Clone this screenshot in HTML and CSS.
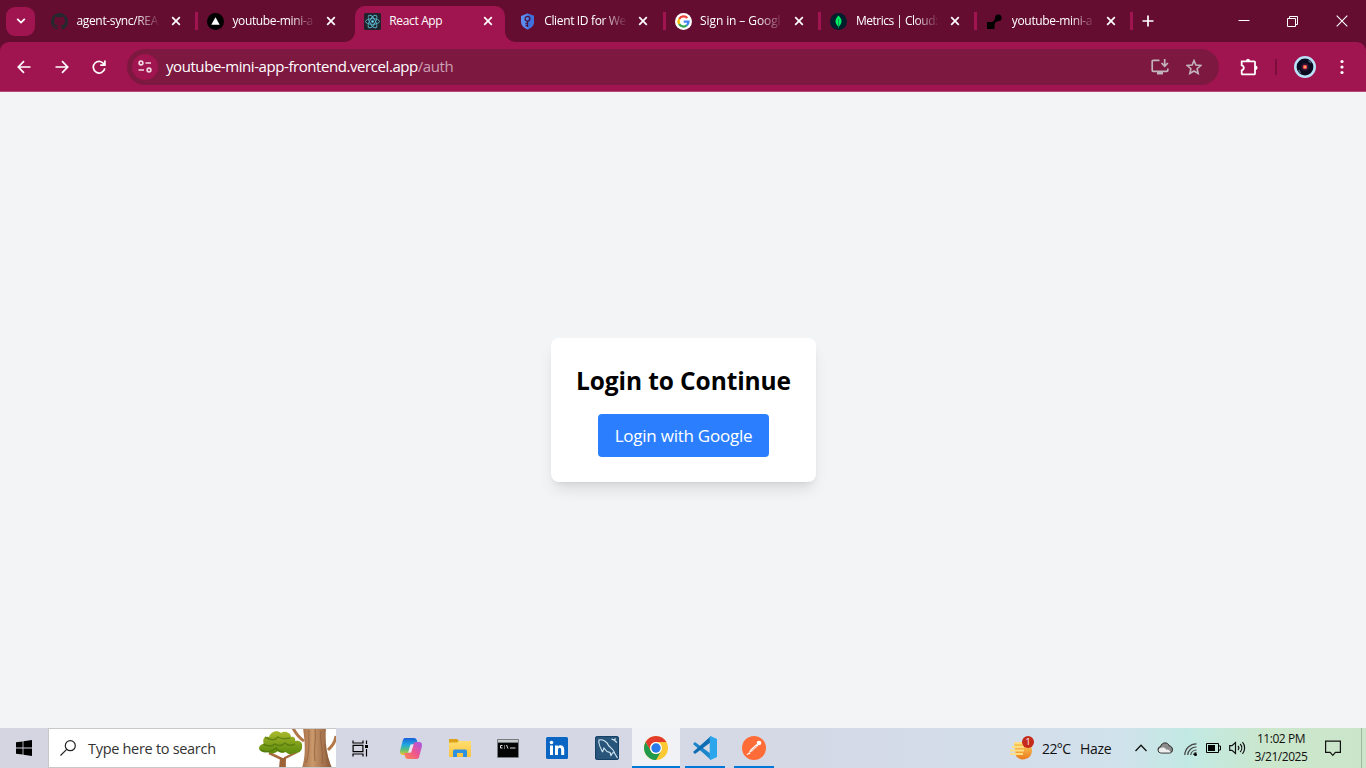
FILE: index.html
```html
<!DOCTYPE html>
<html lang="en">
<head>
<meta charset="utf-8">
<title>React App</title>
<link rel="stylesheet" href="styles.css">
</head>
<body>
<svg width="0" height="0" class="defs">
  <defs>
    <symbol id="close" viewBox="0 0 10 10"><path d="M1.2 1.2l7.6 7.6M8.8 1.2L1.2 8.800" stroke="#fff" stroke-width="1.7" fill="none"/></symbol>
    <linearGradient id="cop1" x1="0" y1="0" x2="0" y2="1"><stop offset="0" stop-color="#1a5fd8"/><stop offset=".4" stop-color="#1fa8e0"/><stop offset=".7" stop-color="#5cc07a"/><stop offset="1" stop-color="#f2c32e"/></linearGradient>
    <linearGradient id="cop2" x1="1" y1="0" x2="0" y2="1"><stop offset="0" stop-color="#a456ea"/><stop offset=".5" stop-color="#ee5590"/><stop offset="1" stop-color="#fb8a4a"/></linearGradient>
    <linearGradient id="leaf" x1="0" y1="0" x2="0" y2="1"><stop offset="0" stop-color="#a9b92c"/><stop offset="1" stop-color="#5c8a0c"/></linearGradient>
    <linearGradient id="trunk"><stop offset="0" stop-color="#a87048"/><stop offset=".35" stop-color="#c9986b"/><stop offset="1" stop-color="#8a5736"/></linearGradient>
    <linearGradient id="folder" x1="0" y1="0" x2="0" y2="1"><stop offset="0" stop-color="#ffdf70"/><stop offset="1" stop-color="#fcc13c"/></linearGradient>
    <linearGradient id="sun" x1="0" y1="0" x2="0" y2="1"><stop offset="0" stop-color="#f8cf5c"/><stop offset="1" stop-color="#ee7a1c"/></linearGradient>
  </defs>
</svg>
<div class="screen">
  <header class="tabstrip">
    <div class="tab-search"><svg width="10" height="8" viewBox="0 0 10 8"><path d="M1.200 1.800L5 5.600 8.800 1.800" stroke="#fff" stroke-width="1.800" fill="none"/></svg></div>
    <div class="tabs">
      <div class="tab">
        <svg class="fav" viewBox="0 0 16 16"><path fill="#24292f" d="M8 0C3.580 0 0 3.580 0 8c0 3.540 2.290 6.530 5.470 7.590.4.070.55-.17.55-.38v-1.490c-2.010.37-2.530-.49-2.690-.94-.09-.23-.48-.94-.82-1.130-.28-.15-.68-.52-.01-.53.63-.01 1.080.58 1.230.82.72 1.210 1.870.87 2.330.66.07-.52.28-.87.51-1.070-1.780-.2-3.640-.89-3.640-3.950 0-.87.31-1.590.82-2.150-.08-.2-.36-1.020.08-2.120 0 0 .67-.21 2.200.82a7.600 7.600 0 0 1 4 0c1.530-1.040 2.200-.82 2.200-.82.44 1.100.16 1.920.08 2.120.51.56.82 1.270.82 2.150 0 3.070-1.870 3.750-3.650 3.950.29.25.54.73.54 1.480v2.200c0 .21.15.46.55.38A8 8 0 0 0 16 8c0-4.420-3.580-8-8-8z"/></svg>
        <span class="tab-title fade">agent-sync/REA</span><svg class="x"><use href="#close"/></svg>
      </div>
      <div class="tab nosep">
        <svg class="fav" viewBox="0 0 17 17"><circle cx="8.500" cy="8.500" r="8.500"/><path d="M8.500 4.200l4.200 7.600H4.300z" fill="#fff"/></svg>
        <span class="tab-title fade">youtube-mini-a</span><svg class="x"><use href="#close"/></svg>
      </div>
      <div class="tab active nosep">
        <svg class="fav" viewBox="0 0 17 17"><rect width="17" height="17" rx="1.500" fill="#20232a"/><g fill="none" stroke="#58b8d0" stroke-width=".9"><ellipse cx="8.500" cy="8.500" rx="7" ry="2.800"/><ellipse cx="8.500" cy="8.500" rx="7" ry="2.800" transform="rotate(60 8.500 8.500)"/><ellipse cx="8.500" cy="8.500" rx="7" ry="2.800" transform="rotate(120 8.500 8.500)"/></g><circle cx="8.500" cy="8.500" r="1.300" fill="#61dafb"/></svg>
        <span class="tab-title react">React App</span><svg class="x"><use href="#close"/></svg>
      </div>
      <div class="tab">
        <svg class="fav" viewBox="0 0 17 17"><path d="M8.500.5L15 3v5.500c0 3.600-2.600 6.300-6.500 8-3.900-1.700-6.500-4.400-6.500-8V3z" fill="#5b8cf0"/><path d="M8.500.5L15 3v5.500c0 3.600-2.600 6.300-6.500 8z" fill="#3f70dc"/><circle cx="8.500" cy="5.700" r="2.400" fill="none" stroke="#4a1445" stroke-width="1.300"/><path d="M8.500 8v6M8.500 10.500h-2M8.500 12.700h-2" stroke="#4a1445" stroke-width="1.300"/></svg>
        <span class="tab-title fade">Client ID for We</span><svg class="x"><use href="#close"/></svg>
      </div>
      <div class="tab">
        <svg class="fav" viewBox="0 0 17 17"><circle cx="8.500" cy="8.500" r="8.500" fill="#fff"/><g fill="none" stroke-width="2.300"><path d="M12.300 5A5 5 0 0 0 4.200 6" stroke="#ea4335"/><path d="M4.200 6a5 5 0 0 0 0 5" stroke="#fbbc05"/><path d="M4.200 11a5 5 0 0 0 7.500 1.400" stroke="#34a853"/><path d="M8.700 8.700h4.800a5 5 0 0 1-1.800 3.700" stroke="#4285f4"/></g></svg>
        <span class="tab-title fade wide">Sign in – Googl</span><svg class="x"><use href="#close"/></svg>
      </div>
      <div class="tab">
        <svg class="fav" viewBox="0 0 17 17"><circle cx="8.500" cy="8.500" r="8.500" fill="#001e2b"/><path d="M8.500 2.500c4 4 4 7.500 0 11.500-4-4-4-7.500 0-11.500z" fill="#00ed64"/><path d="M8.500 6v9" stroke="#0a8c4b" stroke-width=".8"/></svg>
        <span class="tab-title fade tight">Metrics | Cloud:</span><svg class="x"><use href="#close"/></svg>
      </div>
      <div class="tab">
        <svg class="fav" viewBox="0 0 17 17"><path d="M1 9h4.500C8 8.500 9 7 9 4.500A3.300 3.300 0 1 1 13 8c-3 .300-4.500 1.500-4.500 4.500V16H1z"/></svg>
        <span class="tab-title fade">youtube-mini-a</span><svg class="x"><use href="#close"/></svg>
      </div>
    </div>
    <svg class="newtab" width="12" height="12" viewBox="0 0 12 12"><path d="M6 .5v11M.5 6h11" stroke="#fff" stroke-width="1.700"/></svg>
    <div class="winctl">
      <svg width="12" height="12" viewBox="0 0 12 12"><path d="M.5 5.500h11" stroke="#fff"/></svg>
      <svg width="12" height="12" viewBox="0 0 12 12"><path d="M.5 3.500h8v8h-8zM2.500 3.500v-2h8v8h-2" stroke="#fff" fill="none"/></svg>
      <svg width="12" height="12" viewBox="0 0 12 12"><path d="M.7.700l10.600 10.600M11.300.7L.7 11.300" stroke="#fff" stroke-width="1.100"/></svg>
    </div>
  </header>
  <div class="toolbar-wrap">
  <nav class="toolbar">
    <div class="navbtns">
      <svg width="14" height="14" viewBox="0 0 14 14"><path d="M13.500 7H1.500M7 1.200L1.300 7 7 12.800" stroke="#fff" stroke-width="1.700" fill="none"/></svg>
      <svg width="14" height="14" viewBox="0 0 14 14"><path d="M.5 7h12M7 1.200L12.700 7 7 12.800" stroke="#fff" stroke-width="1.700" fill="none"/></svg>
      <svg width="14" height="14" viewBox="0 0 14 14"><path d="M12.300 4.600A5.800 5.800 0 1 0 12.800 8.300M12.900.5v4.700H8.200" stroke="#fff" stroke-width="1.700" fill="none"/></svg>
    </div>
    <div class="omnibox">
      <div class="siteinfo"><svg width="14" height="13" viewBox="0 0 14 13" fill="none" stroke="#f0d8e2" stroke-width="1.600"><circle cx="3" cy="3" r="1.900"/><path d="M7.500 3H13M.5 10H6"/><circle cx="11" cy="10" r="1.900"/></svg></div>
      <div class="url">youtube-mini-app-frontend.vercel.app<span>/auth</span></div>
      <svg class="install" width="18" height="16" viewBox="0 0 18 16" fill="none" stroke="#c3b3bb" stroke-width="1.700"><path d="M8.500 1.300H2.200a1 1 0 0 0-1 1v9a1 1 0 0 0 1 1h13.600a1 1 0 0 0 1-1V9.500M13.700 0v6.800M10.500 4l3.200 3.200L16.900 4"/><path d="M6 14h6" stroke-width="3"/></svg>
      <svg class="star" width="16" height="16" viewBox="0 0 16 16"><path d="M8 1.600l1.900 4.500 4.900.4-3.700 3.200 1.100 4.800L8 12l-4.200 2.500 1.100-4.800L1.200 6.500l4.900-.4z" stroke="#c3b3bb" stroke-width="1.600" fill="none"/></svg>
    </div>
    <svg class="puzzle" width="18" height="18" viewBox="0 0 18 18"><path d="M1.700 3.400H14.200a.8.8 0 0 1 .8.800v11.300a.8.8 0 0 1-.8.800H2.500a.8.8 0 0 1-.8-.8V12.400a2.600 2.600 0 0 0 0-5.100z" fill="none" stroke="#fff" stroke-width="1.800"/><path d="M5.800 3.400a2.200 2.600 0 0 1 4.400 0zM15 7.600a2.600 2.200 0 0 1 0 4.400z" fill="#fff"/></svg>
    <i class="divider"></i>
    <svg class="avatar" width="22" height="22" viewBox="0 0 22 22"><circle cx="11" cy="11" r="9.700" fill="#090c20" stroke="#b9e1f8" stroke-width="2.600"/><path d="M14.500 4.500l2.500 2.500M4.500 14l2 3" stroke="#4c566e" stroke-width="1.600"/><circle cx="11" cy="11" r="4" fill="#2a1430"/><circle cx="11" cy="11" r="2.300" fill="#ef4650"/><circle cx="11" cy="11" r="1" fill="#ffc65a"/></svg>
    <svg class="dots" width="4" height="16" viewBox="0 0 4 16" fill="#fff"><circle cx="2" cy="2.500" r="1.600"/><circle cx="2" cy="8" r="1.600"/><circle cx="2" cy="13.500" r="1.600"/></svg>
  </nav>
  </div>
  <main class="page">
    <section class="card">
      <h2>Login to Continue</h2>
      <button class="login">Login with Google</button>
    </section>
  </main>
  <footer class="taskbar">
    <div class="start"><svg width="16" height="16" viewBox="0 0 16 16"><path d="M0 2.300l6.600-.9v6.200H0zM7.400 1.300L16 0v7.600H7.400zM0 8.400h6.600v6.200L0 13.700zM7.400 8.400H16V16l-8.600-1.200z"/></svg></div>
    <div class="search">
      <svg class="mag" width="16" height="16" viewBox="0 0 16 16" fill="none" stroke="#222" stroke-width="1.200"><circle cx="10.300" cy="5.700" r="5"/><path d="M6.700 9.300L.5 15.500"/></svg>
      <span>Type here to search</span>
      <svg class="tree" width="77" height="40" viewBox="0 0 77 40">
        <path d="M22 40l1-9-13-6M25 40l1-10 12-6" stroke="#a56b3e" stroke-width="2.500" fill="none"/><path d="M20 40l1-10h5l1 10z" fill="#9c6339"/>
        <path d="M0 21c0-4 3-5 5-5-2-4 0-8 5-7C12 3 19 2 22 5c4-3 10 0 10 4 3-1 5 2 4 4 5-1 8 2 7 6 0 5-4 6-7 6-4 2-8 1-9-1-3 1-7 1-8-1-3 3-8 3-10 1-5 1-9-1-9-4z" fill="url(#leaf)"/>
        <path d="M4 16c4 2 9 3 12 0 3 2 7 2 10-1 2 2 6 3 10 1M6 9c5 3 10 4 13 0 3 2 8 2 12 1M2 22c5 3 11 2 15-2 2 3 4 4 8 4" stroke="#4c7009" stroke-width="1.500" fill="none" opacity=".65"/>
        <path d="M34 0c3 6 5 9 11 13M77 8c-1 7-4 10-8 14" stroke="#b3784a" stroke-width="3" fill="none"/>
        <path d="M44 0h23c-1 13 0 26 6 40H43c4-13 3-26 1-40z" fill="url(#trunk)"/>
        <path d="M50 2c-1 11 2 19-3 33M56 0c2 12-2 18 0 33M62 3c-2 9 3 18 1 33M66 16c0 6 2 12 3 18" stroke="#8c5a38" stroke-width="1.200" fill="none" opacity=".6"/>
      </svg>
    </div>
    <div class="app"><svg width="17" height="17" viewBox="0 0 17 17" fill="none" stroke="#000" stroke-width="1.200"><path d="M1 .5V3h10V.5M1 16.500V14h10v2.500M1.100 5.300h9.800v6.400H1.100zM14.500.5V4M14.500 9v7.500"/><path d="M13 5h3v3h-3z" fill="#000" stroke="none"/></svg></div>
    <div class="app a2"><svg width="22" height="21" viewBox="0 0 22 21"><path d="M5 0h9c2 0 2.700 1.500 3.200 3.500L18 6h-4c-2 0-3 1-3.600 3L8.500 15.300C8 17 7 17 5 17H3c-3 0-3.500-2.500-2.500-6l2-7.500C3 1.300 3.500 0 5 0z" fill="url(#cop1)"/><path d="M17 21H8c-2 0-2.700-1.500-3.200-3.500L4 15h4c2 0 3-1 3.600-3l1.900-6.300C14 4 15 4 17 4h2c3 0 3.500 2.500 2.500 6l-2 7.500C19 19.700 18.500 21 17 21z" fill="url(#cop2)"/><path d="M10.500 6.500h3l-2.400 8h-3z" fill="#e8e4f2"/></svg></div>
    <div class="app a3"><svg width="22" height="18" viewBox="0 0 22 18"><path d="M0 1a1 1 0 0 1 1-1h7l2 2-2 2H0z" fill="#dba117"/><path d="M0 3.500h8l2-1.500h11a1 1 0 0 1 1 1v14a1 1 0 0 1-1 1H1a1 1 0 0 1-1-1z" fill="url(#folder)"/><path d="M4 18v-6a1.500 1.500 0 0 1 1.500-1.500h11A1.500 1.500 0 0 1 18 12v6h-4v-4H8v4z" fill="#3092df"/></svg></div>
    <div class="app"><svg width="22" height="19" viewBox="0 0 22 19"><rect width="22" height="19" rx="1" fill="#777c80"/><path d="M1 1h20v2H1z" fill="#c8cbcc"/><path d="M1 4h20v14H1z" fill="#050505"/><path d="M5.500 6.500h-2V9h2M7.500 6.500v1M7.500 8.500v1M9.500 6l1.500 3.500M13 9h5.500" stroke="#ddd" fill="none"/></svg></div>
    <div class="app a5"><svg width="22" height="22" viewBox="0 0 22 22"><rect width="22" height="22" rx="1.500" fill="#0a66c2"/><path d="M4 8.500h3V18H4zM9 8.500h2.900v1.300c1.500-2.400 6.300-2 6.300 2.700V18h-3v-5c0-3-3.200-2.800-3.200 0v5H9z" fill="#fff"/><circle cx="5.500" cy="5.500" r="1.800" fill="#fff"/></svg></div>
    <div class="app"><svg width="24" height="24" viewBox="0 0 24 24"><rect width="24" height="24" rx="2.500" fill="#28567b"/><rect x=".5" y=".5" width="23" height="23" rx="2" fill="none" stroke="#174164"/><path d="M7.500 16C6 13 3 8 4 4c4-1 8 2 9.500 5.500C16 12 19 14 19.500 17l3 5M7.500 16l1.500-4 3 3.500 3 1 1 3 1.500-2.500 2-.5M16.500 3l2.500 1 1-1v2l2 1.500" fill="none" stroke="#d5e7f3" stroke-width="1.100"/></svg></div>
    <div class="app chrome"><svg width="24" height="24" viewBox="0 0 24 24"><circle cx="12" cy="12" r="12" fill="#fcc934"/><path d="M1.610 6A12 12 0 0 1 22.390 6H12a6 6 0 0 0-5.200 9z" fill="#e33b2e"/><path d="M1.610 6A12 12 0 0 0 12 24l5.200-9A6 6 0 0 1 6.800 15z" fill="#229a4d"/><circle cx="12" cy="12" r="6" fill="#fff"/><circle cx="12" cy="12" r="4.700" fill="#287be8"/></svg></div>
    <div class="app vs"><svg width="24" height="24" viewBox="0 0 24 24"><path d="M0 8l2-2 16 12v6z" fill="#1c86cc"/><path d="M0 16l2 2L18 6V0z" fill="#0f6db3"/><path d="M17.500 0L24 3v18l-6.500 3c-.8-.5-.8-1-.8-2V2c0-1 0-1.500.8-2z" fill="#2ba5ec"/></svg></div>
    <div class="app pm"><svg width="24" height="24" viewBox="0 0 24 24"><circle cx="12" cy="12" r="12" fill="#ff6c37"/><path d="M6.500 17l2-3.500 6-5.500 2 1.500-6.500 6z" fill="#fff"/><circle cx="17" cy="7" r="2.300" fill="#fff"/><path d="M9 15.500l5.500-5.500" stroke="#e2825e" stroke-width=".8"/><path d="M4.800 18.500l3.500-1.500" stroke="#fff" stroke-width="1.200"/></svg></div>
    <div class="tray">
      <svg class="weather" width="24" height="24" viewBox="0 0 24 24"><path d="M4 7h13a8 8 0 0 1 5 7 9 9 0 0 1-16 6z" fill="url(#sun)"/><path d="M4 7h9M2 11h12M0 14.500h14M0 18h13" stroke="#ffdd83" stroke-width="1.900"/><circle cx="18" cy="6" r="6" fill="#c42b1c"/><text x="18" y="9.300" text-anchor="middle" class="badge">1</text></svg>
      <span class="temp">22°C</span><span class="haze">Haze</span>
      <svg class="chev" width="12" height="8" viewBox="0 0 12 8"><path d="M.5 7L6 1.300 11.500 7" fill="none" stroke="#111" stroke-width="1.300"/></svg>
      <svg class="cloud" width="16" height="12" viewBox="0 0 16 12"><path d="M4 11a3.300 3.300 0 0 1-.5-6.500C5-.2 11-.2 12.300 4 16.500 4.200 16.500 11 12.500 11z" fill="#8c8c8c" stroke="#222"/><path d="M3.800 10.500C1 10 1 6.500 4 6c2-1 4-.5 5 1.500 2-.5 4 .5 4.500 3z" fill="#eee"/></svg>
      <svg class="wifi" width="13" height="13" viewBox="0 0 13 13" fill="none" stroke="#444" stroke-width="1.200"><path d="M.8 12A11.500 11.500 0 0 1 12.500.8M3.700 12A8.500 8.500 0 0 1 12.500 4M6.700 12a5.800 5.800 0 0 1 5.800-5M9.500 12a3 3 0 0 1 3-2.500"/><circle cx="11.500" cy="11.500" r="1.500" fill="#000" stroke="none"/></svg>
      <svg class="bat" width="15" height="10" viewBox="0 0 15 10"><path d="M.5.500h12v9H.5zM12.500 3h2v4h-2" fill="none" stroke="#000"/><path d="M2 2h7v6H2z"/></svg>
      <svg class="spk" width="17" height="14" viewBox="0 0 17 14" fill="none" stroke="#111" stroke-width="1.200"><path d="M.7 4.700h2.300l3.500-3.200v11L3 9.300H.7zM9 5a3 3 0 0 1 0 4M11.200 3a6 6 0 0 1 0 8M13.500 1.200a9 9 0 0 1 0 11.600"/></svg>
      <div class="clock"><div class="time">11:02 PM</div><div class="date">3/21/2025</div></div>
      <svg class="notif" width="16" height="17" viewBox="0 0 16 17"><path d="M.6 1.100h14.800v11.300h-5L7.800 15.300l-2.600-2.900H.6z" fill="none" stroke="#111" stroke-width="1.200"/></svg>
      <i class="peek"></i>
    </div>
  </footer>
</div>
</body>
</html>
```
FILE: styles.css
```css
* { box-sizing: border-box; }
body { margin: 0; font-family: "Open Sans", "Noto Sans", sans-serif; }
svg { display: block; flex: none; }
.defs { position: absolute; }
.screen { width: 1366px; height: 768px; display: flex; flex-direction: column; overflow: hidden; background: #650d31; }

.tabstrip { height: 42px; flex: none; display: flex; align-items: center; padding-left: 6px; }
.tab-search { width: 29px; height: 29px; border-radius: 9px; background: #a0154f; display: flex; align-items: center; justify-content: center; margin-right: 7px; }
.tabs { display: flex; height: 42px; }
.tab { width: 155.900px; height: 42px; display: flex; align-items: center; padding-left: 9px; background: linear-gradient(#a0154f, #a0154f) 100% 12px / 3px 18px no-repeat; }
.tab.nosep { background: none; }
.fav { width: 17px; height: 17px; }
.tab-title { width: 86px; margin-left: 8.500px; padding-bottom: 0; white-space: nowrap; color: #fff; font-size: 12px; line-height: 18px; letter-spacing: -.35px; }
.tab-title.wide { letter-spacing: -.1px; }
.tab-title.tight { letter-spacing: -.5px; }
.fade { -webkit-mask-image: linear-gradient(90deg, #000 68%, transparent 97%); mask-image: linear-gradient(90deg, #000 68%, transparent 97%); }
.x { width: 10px; height: 10px; margin-left: 8px; }
.tab.active { position: relative; z-index: 0; padding-left: 10px; }
.tab.active::before { content: ""; position: absolute; z-index: -1; left: 1.200px; width: 150px; top: 6px; bottom: 0; background: #a0154f; border-radius: 10px 10px 0 0; }
.tab.active::after { content: ""; position: absolute; z-index: -1; left: -8.800px; width: 170px; bottom: 0; height: 10px; background: radial-gradient(circle at 0 0, transparent 9.500px, #a0154f 10px) 0 0 / 10px 10px no-repeat, radial-gradient(circle at 100% 0, transparent 9.500px, #a0154f 10px) 100% 0 / 10px 10px no-repeat; }
.newtab { margin-left: 9px; }
.winctl { margin-left: auto; display: flex; gap: 37px; padding-right: 18px; }

.toolbar-wrap { flex: none; background: #650d31; }
.toolbar { height: 50px; background: #a0154f; border-bottom: 1px solid #b54b77; border-radius: 9px 9px 0 0; display: flex; align-items: center; padding-left: 17px; }
.navbtns { display: flex; gap: 23.500px; width: 110px; }
.omnibox { width: 1092px; height: 36px; border-radius: 18px; background: #7d1841; display: flex; align-items: center; padding-left: 5px; }
.siteinfo { width: 26px; height: 26px; border-radius: 50%; background: #a0154f; display: flex; align-items: center; justify-content: center; }
.url { margin-left: 8px; width: 985px; padding-bottom: 2px; color: #fff; font-size: 15px; letter-spacing: -.43px; white-space: nowrap; }
.url span { color: #cda0b4; }
.star { margin-left: 17px; }
.puzzle { margin-left: 21px; }
.divider { width: 2px; height: 16px; background: #7d0e3c; margin-left: 17px; }
.avatar { margin-left: 17px; }
.dots { margin-left: 24px; }

.page { flex: 1; background: #f3f4f6; display: flex; align-items: center; justify-content: center; }
.card { width: 265px; height: 144px; background: #fff; border-radius: 8px; padding-top: 26px; display: flex; flex-direction: column; align-items: center; box-shadow: 0 10px 15px -3px rgba(0,0,0,.1), 0 4px 6px -4px rgba(0,0,0,.1); }
.card h2 { margin: 0 0 16px; padding-left: 1px; font-size: 24.500px; line-height: 34px; font-weight: 700; letter-spacing: -.1px; white-space: nowrap; }
.login { width: 171px; height: 43px; border: 0; padding: 0 0 0 1px; border-radius: 4px; background: #2b7fff; color: #fff; font: 17px "Open Sans", sans-serif; letter-spacing: -.24px; white-space: nowrap; }

.taskbar { height: 40px; flex: none; display: flex; align-items: center; background: linear-gradient(90deg, #d5d5e2 0, #d5d8e5 750px, #d3deeb 1030px, #d0e2eb 1120px, #c2e9e3 1190px, #cbe7cc 1270px, #cae5ca 1366px); }
.start { width: 48px; display: flex; justify-content: center; }
.search { width: 288px; height: 40px; background: #fff; border: 1px solid #c8c8c8; border-right: 0; display: flex; align-items: center; padding-left: 11px; overflow: hidden; }
.search span { margin-left: 12px; width: 171px; font-size: 14.500px; color: #333; letter-spacing: -.3px; white-space: nowrap; }
.app { width: 49px; height: 40px; display: flex; align-items: center; justify-content: center; }
.app.a2 { width: 51px; }
.app.a3 { width: 47px; }
.app.a5 { width: 50px; }
.app.chrome { width: 48px; background: #f0f2f6; border-bottom: 2px solid #0078d7; padding-top: 2px; margin-left: 1px; }
.app.vs, .app.pm { width: 40px; margin-left: 5px; border-bottom: 2px solid #0078d7; padding-top: 2px; }
.app.pm { margin-left: 9px; }
.tray { margin-left: auto; display: flex; align-items: center; width: 356px; height: 40px; color: #111; font-size: 14px; white-space: nowrap; }
.weather { margin-left: 0; }
.badge { font: 9px "Open Sans", sans-serif; fill: #fff; }
.temp { width: 38px; margin-left: 8px; letter-spacing: -.6px; }
.haze { width: 55px; letter-spacing: -.3px; }
.cloud { margin-left: 10px; }
.wifi { margin-left: 11px; margin-top: 2px; }
.bat { margin-left: 9px; }
.spk { margin-left: 8px; }
.clock { width: 60px; margin-left: 5px; text-align: center; font-size: 12px; line-height: 18px; letter-spacing: -.45px; }
.notif { margin-left: 14px; }
.peek { width: 1px; height: 40px; background: #9eb7a0; margin-left: 20px; }
```
